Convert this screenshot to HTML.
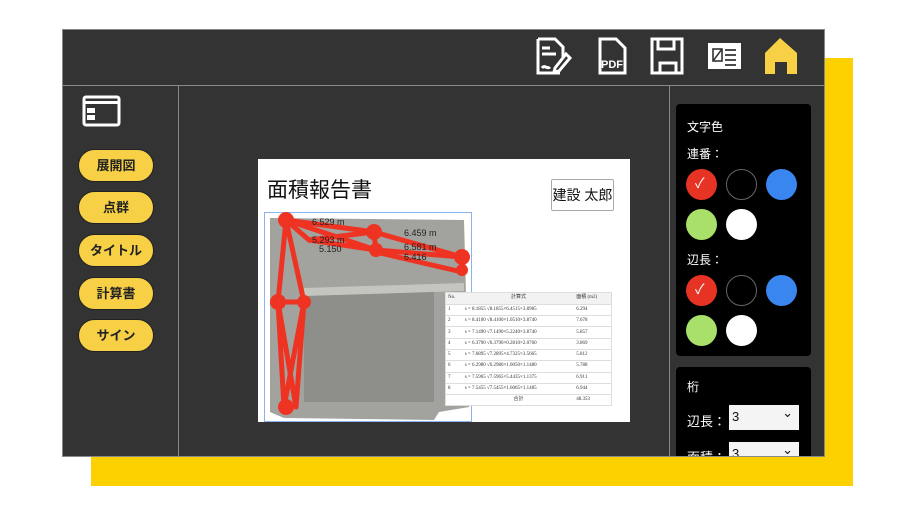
<!DOCTYPE html><html><head><meta charset="utf-8"><style>
*{margin:0;padding:0;box-sizing:border-box}
body{width:916px;height:515px;background:#fff;position:relative;overflow:hidden;font-family:"Liberation Sans","Noto Sans CJK JP",sans-serif}
.a{position:absolute}
.btn{position:absolute;left:78px;width:76px;height:33px;border-radius:17px;background:#f7d046;border:1px solid #222;font-size:13px;font-weight:bold;color:#222;text-align:center;line-height:31px}
.c{position:absolute;width:31px;height:31px;border-radius:50%}
.lab{position:absolute;color:#fff;font-size:12px}
.sel{position:absolute;width:70px;height:25px;background:#f4f4f4;font-size:13px;padding:4px 3px;color:#111}
.sel:after{content:"⌄";position:absolute;right:6px;top:0px;font-size:13px}
table{border-collapse:collapse;font-size:5px;font-family:"Liberation Serif",serif;color:#333;width:100%;line-height:6px}
td{border-bottom:1px solid #ddd;height:11.3px;padding:0 2px}
</style></head><body>
<div class="a" style="left:91px;top:58px;width:762px;height:428px;background:#fdd000"></div>
<div class="a" style="left:62px;top:29px;width:763px;height:428px;background:#333;border:1px solid #888"></div>
<div class="a" style="left:63px;top:85px;width:762px;height:1px;background:#888"></div>
<div class="a" style="left:178px;top:86px;width:1px;height:370px;background:#888"></div>
<div class="a" style="left:669px;top:86px;width:1px;height:370px;background:#888"></div>
<svg class="a" style="left:530px;top:36px" width="300" height="42" viewBox="0 0 300 42">
<g fill="none" stroke="#fff" stroke-width="3">
<path d="M8 3h17l8 8v10M8 3v34h22"/><path d="M12 12h8M12 18h14"/><path d="M12 32c3-4 5 2 8-1"/><path d="M25 32l11-14 4 4-11 13-5 1z"/>
<path d="M70 3h16l9 9v25H70z"/>
<path d="M122 3h30v34h-30z M128 3v10h16V3 M130 37v-10h16v10"/>
</g>
<rect x="178" y="7" width="33" height="26" fill="#fff"/>
<text x="71" y="32" fill="#fff" font-size="11" font-weight="bold" font-family="Liberation Sans">PDF</text>
<rect x="183" y="13" width="9" height="12" fill="none" stroke="#333" stroke-width="1.6"/><path d="M183 25l9-12" stroke="#333" stroke-width="1.5"/>
<path d="M195 14h11M195 19h11M195 24h11M195 29h11" stroke="#333" stroke-width="1.8"/>
<path d="M250 2l17 15v21h-10v-12h-12v12h-10V17z" fill="#f7d046"/>
</svg>
<svg class="a" style="left:82px;top:95px" width="40" height="32"><rect x="2" y="2" width="35" height="28" rx="2" fill="none" stroke="#fff" stroke-width="3"/><rect x="3" y="6" width="34" height="3" fill="#fff"/><rect x="5" y="13" width="8" height="5" fill="#fff"/><rect x="5" y="20" width="8" height="5" fill="#fff"/></svg>
<div class="btn" style="top:149px">展開図</div>
<div class="btn" style="top:191px">点群</div>
<div class="btn" style="top:234px">タイトル</div>
<div class="btn" style="top:277px">計算書</div>
<div class="btn" style="top:319px">サイン</div>
<div class="a" style="left:258px;top:159px;width:372px;height:263px;background:#fff"></div>
<div class="a" style="left:267px;top:174px;font-size:21px;color:#111">面積報告書</div>
<div class="a" style="left:551px;top:179px;width:63px;height:32px;border:1px solid #aaa;border-radius:2px;font-size:14px;line-height:30px;text-align:center;color:#111">建設 太郎</div>
<div class="a" style="left:264px;top:212px;width:208px;height:210px;border:1.5px solid #8ab4ee;background:#fff"></div>
<svg class="a" style="left:264px;top:212px" width="208" height="210">
<path d="M6 6L200 8L205 195L175 200L170 208L20 206L6 200Z" fill="#a2a29e"/>
<path d="M40 80h130v110h-130z" fill="#8e8e8a"/>
<path d="M40 80L200 75" stroke="#c5c5c0" stroke-width="8"/>
<g stroke="#ee3322" stroke-width="5" fill="none" stroke-linecap="round">
<path d="M22 8L110 20L198 45L112 38L22 8 M22 8L45 28L110 20M45 28L112 38M110 20L112 40M198 45L200 60M112 40L198 60"/>
<path d="M22 8L14 90L40 90L22 8 M14 90L20 195M40 90L32 195M14 90L32 195M40 90L20 195"/>
</g>
<g fill="#ee3322"><circle cx="22" cy="8" r="8"/><circle cx="110" cy="20" r="8"/><circle cx="198" cy="45" r="8"/><circle cx="112" cy="38" r="7"/><circle cx="14" cy="90" r="8"/><circle cx="40" cy="90" r="7"/><circle cx="22" cy="195" r="8"/><circle cx="198" cy="58" r="6"/></g>
<g font-size="9" fill="#222" font-family="Liberation Sans"><text x="48" y="13">6.529 m</text><text x="48" y="31">5.293 m</text><text x="55" y="40">5.150</text><text x="140" y="24">6.459 m</text><text x="140" y="38">6.581 m</text><text x="140" y="48">6.416</text></g>
</svg>
<div class="a" style="left:445px;top:292px;width:167px;height:114px;background:#fff;border:1px solid #ddd;overflow:hidden">
<table><tr style="background:#f2f2f2"><td>No.</td><td style="text-align:center">計算式</td><td>面積 (m2)</td></tr>
<tr><td>1</td><td>s = 8.1855 √8.1855×6.4515×3.8985</td><td>6.294</td></tr>
<tr><td>2</td><td>s = 8.4100 √8.4100×1.0510×3.8740</td><td>7.678</td></tr>
<tr><td>3</td><td>s = 7.1490 √7.1490×5.2240×3.8740</td><td>5.857</td></tr>
<tr><td>4</td><td>s = 6.3790 √6.3790×0.2810×2.0760</td><td>3.869</td></tr>
<tr><td>5</td><td>s = 7.6895 √7.2895×4.7325×3.5665</td><td>5.812</td></tr>
<tr><td>6</td><td>s = 6.2980 √6.2980×1.0050×1.1480</td><td>5.788</td></tr>
<tr><td>7</td><td>s = 7.5965 √7.5965×5.4435×1.1375</td><td>6.911</td></tr>
<tr><td>8</td><td>s = 7.5455 √7.5455×1.6065×1.1485</td><td>6.944</td></tr>
<tr><td></td><td style="text-align:center">合計</td><td>48.353</td></tr></table></div>
<div class="a" style="left:676px;top:104px;width:135px;height:252px;background:#000;border-radius:4px"></div>
<div class="lab" style="left:687px;top:118px">文字色</div>
<div class="lab" style="left:687px;top:145px">連番：</div>
<div class="c" style="left:686px;top:169px;background:#e63323"></div><div class="a" style="left:695px;top:173px;color:#fff;font-size:14px">✓</div>
<div class="c" style="left:726px;top:169px;border:1px solid #666"></div>
<div class="c" style="left:766px;top:169px;background:#3a86f0"></div>
<div class="c" style="left:686px;top:209px;background:#a8e06a"></div>
<div class="c" style="left:726px;top:209px;background:#fff"></div>
<div class="lab" style="left:687px;top:251px">辺長：</div>
<div class="c" style="left:686px;top:275px;background:#e63323"></div><div class="a" style="left:695px;top:279px;color:#fff;font-size:14px">✓</div>
<div class="c" style="left:726px;top:275px;border:1px solid #666"></div>
<div class="c" style="left:766px;top:275px;background:#3a86f0"></div>
<div class="c" style="left:686px;top:315px;background:#a8e06a"></div>
<div class="c" style="left:726px;top:315px;background:#fff"></div>
<div class="a" style="left:676px;top:367px;width:135px;height:89px;background:#000;border-radius:4px 4px 0 0;overflow:hidden">
<div class="lab" style="left:11px;top:11px">桁</div>
<div class="lab" style="left:11px;top:44px;font-size:13px">辺長：</div>
<div class="lab" style="left:11px;top:80px;font-size:13px">面積：</div>
<div class="sel" style="left:53px;top:38px">3</div>
<div class="sel" style="left:53px;top:75px">3</div>
</div>
</body></html>
